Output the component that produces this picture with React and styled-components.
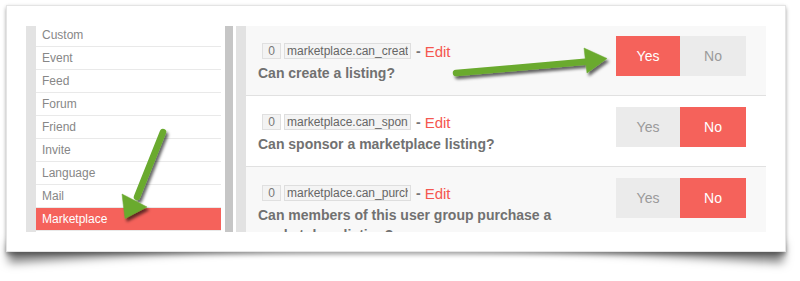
import React from 'react'
import styled, { createGlobalStyle } from 'styled-components'

const GlobalStyle = createGlobalStyle`
  html, body {
    margin: 0;
    padding: 0;
    background: #fff;
    font-family: "Liberation Sans", Arial, sans-serif;
  }
`

const Page = styled.div`
  position: relative;
  isolation: isolate;
  width: 800px;
  height: 281px;
  padding: 5px 0 0 6px;
  box-sizing: border-box;
  overflow: hidden;
`

const Card = styled.div`
  position: relative;
  width: 780px;
  height: 247px;
  box-sizing: border-box;
  padding: 20px 19px 19px;
  background: #fff;
  border: 1px solid #e4e4e4;
  box-shadow: 0 0 3px rgba(0, 0, 0, 0.08), 0 3px 4px rgba(0, 0, 0, 0.3);

  &::before,
  &::after {
    content: '';
    position: absolute;
    z-index: -1;
    bottom: 16px;
    width: 390px;
    height: 20px;
    background: #999;
    box-shadow: 0 16px 10px rgba(0, 0, 0, 0.5);
  }
  &::before {
    left: 0;
    transform: rotate(-3.5deg);
  }
  &::after {
    right: 0;
    transform: rotate(3.5deg);
  }
`

const Frame = styled.div`
  display: flex;
  height: 206px;
  overflow: hidden;
`

const Strip = styled.div`
  flex: none;
  width: ${p => p.w}px;
  margin-left: ${p => p.ml || 0}px;
  background: ${p => p.bg};
`

const Sidebar = styled.ul`
  flex: none;
  width: 185px;
  margin: -2px 4px 0 0;
  padding: 0;
  list-style: none;
  background: #fff;
`

const Item = styled.li`
  height: 22px;
  line-height: 22px;
  padding-left: 6px;
  border-bottom: 1px solid #e9e9e9;
  font-size: 12px;
  color: ${p => (p.active ? '#fff' : '#878787')};
  background: ${p => (p.active ? '#f5625b' : '#fff')};
`

const Content = styled.div`
  flex: 1;
  display: flex;
  flex-direction: column;
  margin-top: -1px;
`

const Row = styled.div`
  flex: none;
  display: flex;
  gap: 12px;
  height: 70px;
  padding: 0 20px 0 12px;
  border-bottom: 1px solid #e1e1e1;
  background: ${p => (p.alt ? '#f8f8f8' : '#fff')};
`

const Info = styled.div`
  flex: 1;
  padding-top: 18px;
`

const KeyLine = styled.div`
  display: flex;
  align-items: center;
  height: 16px;
  padding-left: 4px;
`

const Order = styled.span`
  box-sizing: border-box;
  width: 19px;
  height: 16px;
  line-height: 14px;
  text-align: center;
  font-size: 12px;
  color: #777;
  background: #f3f3f3;
  border: 1px solid #e0e0e0;
`

const KeyInput = styled.input`
  box-sizing: border-box;
  width: 127px;
  height: 16px;
  margin: 0 0 0 3px;
  padding: 0 2px;
  font-family: "Liberation Sans", Arial, sans-serif;
  font-size: 12px;
  color: #666;
  background: #f4f4f4;
  border: 1px solid #dedede;
  outline: none;
`

const Dash = styled.span`
  margin: 0 4px 0 5px;
  font-size: 14px;
  font-weight: bold;
  color: #777;
`

const Edit = styled.a`
  font-size: 15px;
  color: #f5574f;
  text-decoration: none;
`

const Question = styled.div`
  margin-top: 4px;
  font-size: 14px;
  line-height: 20px;
  font-weight: bold;
  color: #717171;
`

const Toggle = styled.div`
  flex: none;
  display: flex;
  margin-top: 11px;
  height: 40px;
`

const Choice = styled.button`
  width: ${p => p.w}px;
  height: 40px;
  border: none;
  padding: 0;
  font-family: "Liberation Sans", Arial, sans-serif;
  font-size: 14px;
  color: ${p => (p.on ? '#fff' : '#9a9a9a')};
  background: ${p => (p.on ? '#f5625b' : '#ebebeb')};
`

const Arrows = styled.svg`
  position: absolute;
  left: 0;
  top: 0;
  pointer-events: none;
`

const groups = ['Custom', 'Event', 'Feed', 'Forum', 'Friend', 'Invite', 'Language', 'Mail', 'Marketplace']

const settings = [
  { key: 'marketplace.can_create_listing', q: 'Can create a listing?', yes: true },
  { key: 'marketplace.can_sponsor_listing', q: 'Can sponsor a marketplace listing?', yes: false },
  { key: 'marketplace.can_purchase_sponsor', q: 'Can members of this user group purchase a marketplace listing?', yes: false },
]

export default function App() {
  return (
    <Page>
      <GlobalStyle />
      <Card>
        <Frame>
          <Strip w={10} bg="#e3e3e3" />
          <Sidebar>
            {groups.map(g => (
              <Item key={g} active={g === 'Marketplace'}>{g}</Item>
            ))}
          </Sidebar>
          <Strip w={8} bg="#c6c6c6" />
          <Strip w={10} ml={3} bg="#e2e2e2" />
          <Content>
            {settings.map((s, i) => (
              <Row key={s.key} alt={i % 2 === 0}>
                <Info>
                  <KeyLine>
                    <Order>0</Order>
                    <KeyInput readOnly value={s.key} />
                    <Dash>-</Dash>
                    <Edit href="#">Edit</Edit>
                  </KeyLine>
                  <Question>{s.q}</Question>
                </Info>
                <Toggle>
                  <Choice w={64} on={s.yes}>Yes</Choice>
                  <Choice w={66} on={!s.yes}>No</Choice>
                </Toggle>
              </Row>
            ))}
          </Content>
        </Frame>
      </Card>
      <Arrows width="800" height="281" viewBox="0 0 800 281">
        <defs>
          <filter id="drop" x="-20%" y="-20%" width="140%" height="140%">
            <feDropShadow dx="2" dy="3" stdDeviation="1.6" floodColor="#000" floodOpacity="0.6" />
          </filter>
        </defs>
        <g filter="url(#drop)" fill="#6aaa2f" stroke="#6aaa2f">
          <line x1="456" y1="73" x2="588" y2="61.5" strokeWidth="6.5" strokeLinecap="round" />
          <polygon points="584,48 607,58.5 587,73" strokeWidth="0.5" strokeLinejoin="round" />
          <line x1="163" y1="132" x2="137" y2="197" strokeWidth="6.5" strokeLinecap="round" />
          <polygon points="122,194 147,207 125,218.5" strokeWidth="0.5" strokeLinejoin="round" />
        </g>
      </Arrows>
    </Page>
  )
}
